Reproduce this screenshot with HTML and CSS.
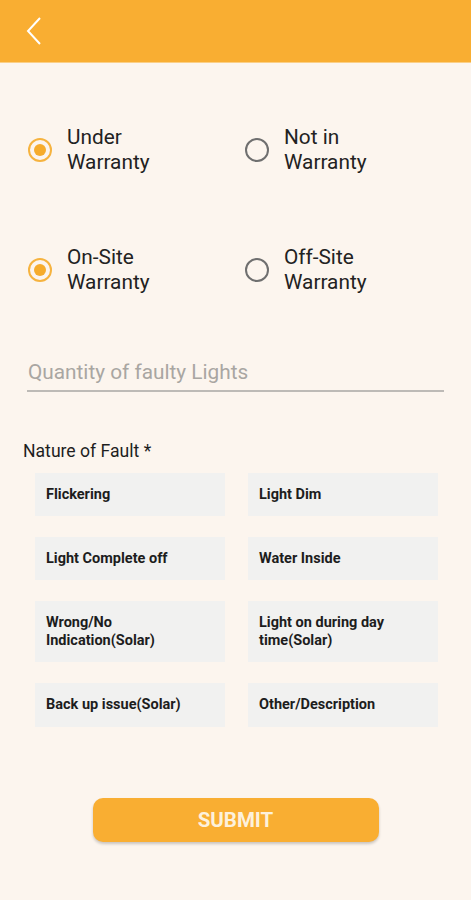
FILE: index.html
```html
<!DOCTYPE html>
<html>
<head>
<meta charset="utf-8">
<link rel="stylesheet" href="styles.css">
</head>
<body>
<header class="topbar">
  <svg class="back" width="20" height="30" viewBox="0 0 20 30"><path d="M15 2 L3 15 L15 28" fill="none" stroke="#fff" stroke-width="2"/></svg>
</header>
<main class="content">
  <div class="radio-row first">
    <label class="radio"><span class="dot on"></span><span class="rlabel">Under<br>Warranty</span></label>
    <label class="radio"><span class="dot"></span><span class="rlabel">Not in<br>Warranty</span></label>
  </div>
  <div class="radio-row second">
    <label class="radio"><span class="dot on"></span><span class="rlabel">On-Site<br>Warranty</span></label>
    <label class="radio"><span class="dot"></span><span class="rlabel">Off-Site<br>Warranty</span></label>
  </div>
  <div class="field">Quantity of faulty Lights</div>
  <div class="section-title">Nature of Fault *</div>
  <div class="grid">
    <div class="chip">Flickering</div>
    <div class="chip">Light Dim</div>
    <div class="chip">Light Complete off</div>
    <div class="chip">Water Inside</div>
    <div class="chip tall">Wrong/No<br>Indication(Solar)</div>
    <div class="chip tall">Light on during day<br>time(Solar)</div>
    <div class="chip last">Back up issue(Solar)</div>
    <div class="chip last">Other/Description</div>
  </div>
  <div class="actions"><button class="submit">SUBMIT</button></div>
</main>
</body>
</html>
```
FILE: styles.css
```css
* { box-sizing: border-box; }
html, body { margin: 0; padding: 0; }
body {
  background: #fcf5ee;
  font-family: Roboto, "Liberation Sans", sans-serif;
  color: #222;
  width: 471px;
  height: 900px;
  overflow: hidden;
}
.topbar {
  height: 63px;
  background: #f9ae32;
  display: flex;
  align-items: center;
  padding-left: 25px;
  border-bottom: 1px solid #fbcf86;
}
.back { display: block; }
.content { padding: 0; }
.radio-row {
  display: grid;
  grid-template-columns: 217px 1fr;
  padding-left: 28px;
}
.radio-row.first { margin-top: 62px; }
.radio-row.second { margin-top: 70px; }
.radio { display: flex; align-items: center; gap: 15px; }
.dot {
  width: 24px; height: 24px;
  border-radius: 50%;
  border: 2px solid #6f6f6f;
  flex: none;
  position: relative;
}
.dot.on { border-color: #f6b33f; }
.dot.on::after {
  content: "";
  position: absolute;
  left: 4px; top: 4px;
  width: 12px; height: 12px;
  border-radius: 50%;
  background: #f6ac2c;
}
.rlabel { font-size: 20.8px; line-height: 25px; color: #222; }
.field {
  margin: 64px 27px 0 27px;
  font-size: 20.8px;
  color: #a9a6a2;
  padding: 0 0 5px 1px;
  border-bottom: 2px solid #bdbab6;
  line-height: 26px;
}
.section-title {
  margin: 49px 0 0 23px;
  font-size: 17.6px;
  line-height: 20px;
  color: #1e1e1e;
}
.grid {
  margin: 12px 34px 0 35px;
  display: grid;
  grid-template-columns: 190px 190px;
  column-gap: 23px;
  row-gap: 21px;
}
.chip {
  background: #f1f1f0;
  min-height: 43px;
  padding: 0 11px;
  display: flex;
  align-items: center;
  font-size: 14.5px;
  font-weight: bold;
  line-height: 18px;
  color: #1d1d1d;
}
.chip.tall { min-height: 61px; }
.chip.last { min-height: 44px; }
.actions { display: flex; justify-content: center; margin-top: 71px; }
.submit {
  width: 286px;
  height: 44px;
  border: none;
  border-radius: 10px;
  background: #f9ae32;
  color: #fdf1dc;
  font-family: Roboto, "Liberation Sans", sans-serif;
  font-weight: bold;
  font-size: 20.5px;
  box-shadow: 0 2px 3px rgba(0,0,0,0.2);
}
```
